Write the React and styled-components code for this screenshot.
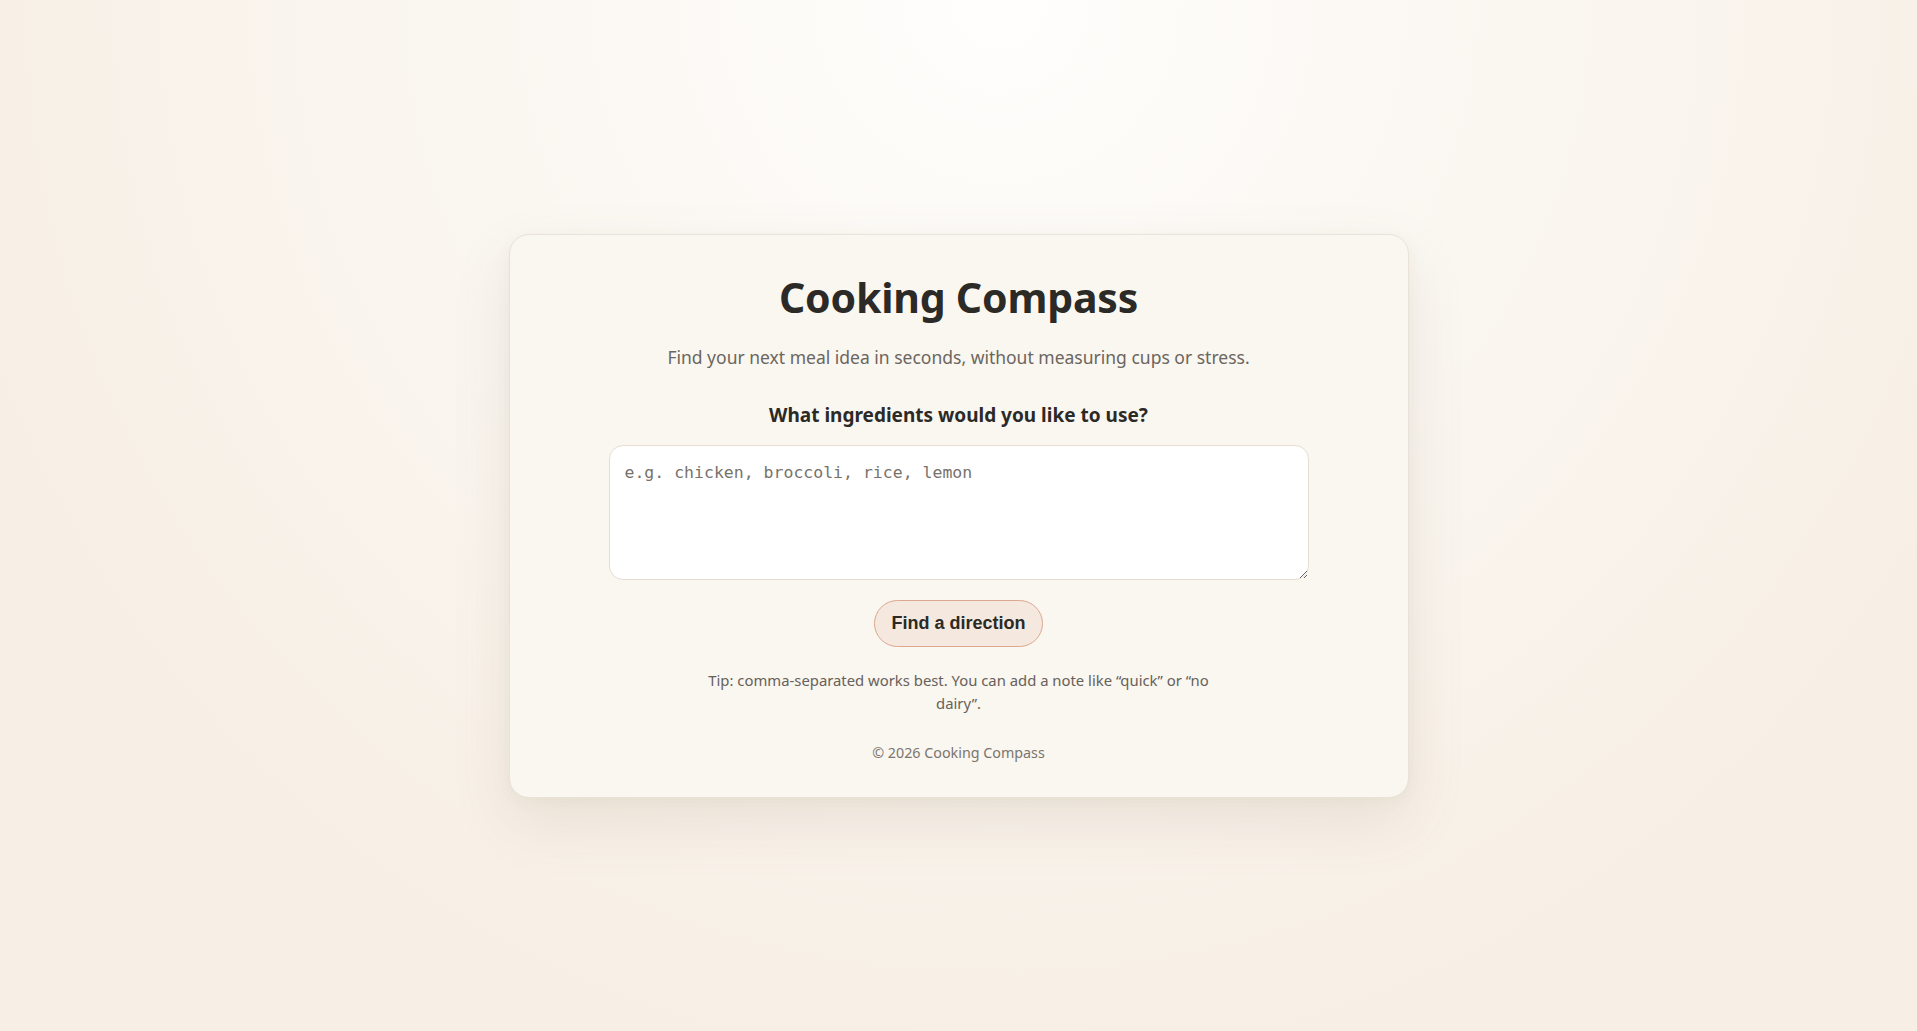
import React from 'react'
import styled, { createGlobalStyle } from 'styled-components'

const GlobalStyle = createGlobalStyle`
  html, body {
    margin: 0;
    padding: 0;
    height: 100%;
  }
  body {
    font-family: "Noto Sans", "Open Sans", sans-serif;
    color: #2b2a26;
    background: #f7efe5;
  }
  #root {
    min-height: 100%;
  }
`

const Page = styled.main`
  min-height: 100vh;
  box-sizing: border-box;
  display: flex;
  align-items: center;
  justify-content: center;
  background: radial-gradient(circle at 52% 0%, #fffefc 0%, #fbf8f3 30%, #f7efe5 75%);
`

const Card = styled.section`
  width: 900px;
  box-sizing: border-box;
  padding: 38px 99px 34px;
  background: #faf6f0;
  border: 1px solid #e9e2d8;
  border-radius: 20px;
  box-shadow: 0 24px 60px rgba(120, 110, 80, 0.12), 0 4px 14px rgba(120, 110, 80, 0.05);
  display: flex;
  flex-direction: column;
  align-items: center;
  text-align: center;
`

const Title = styled.h1`
  margin: 0;
  font-size: 41px;
  line-height: 48px;
  font-weight: 700;
  color: #2b2a26;
  letter-spacing: -0.2px;
`

const Subtitle = styled.p`
  margin: 24px 0 0;
  font-size: 17.5px;
  line-height: 24px;
  color: #6b665f;
`

const Label = styled.label`
  margin-top: 34px;
  font-size: 19px;
  line-height: 24px;
  font-weight: 700;
  color: #2b2a26;
`

const Field = styled.textarea`
  margin-top: 18px;
  width: 100%;
  height: 135px;
  box-sizing: border-box;
  padding: 15px 15px;
  background: #ffffff;
  border: 1px solid #e6ddd2;
  border-radius: 14px;
  font-family: "DejaVu Sans Mono", "Liberation Mono", monospace;
  font-size: 16.5px;
  line-height: 24px;
  color: #2b2a26;
  resize: vertical;
  outline: none;

  &::placeholder {
    color: #77726b;
  }
`

const Button = styled.button`
  margin-top: 20px;
  height: 47px;
  padding: 0 16.5px;
  background: #f5e9df;
  border: 1px solid #dca88e;
  border-radius: 999px;
  font-family: "Liberation Sans", Arial, sans-serif;
  font-size: 18px;
  font-weight: 700;
  color: #2b2a26;
  cursor: pointer;
`

const Tip = styled.p`
  margin: 22px 0 0;
  max-width: 520px;
  font-size: 14.85px;
  line-height: 23px;
  color: #66615a;
`

const Footer = styled.footer`
  margin-top: 28px;
  font-size: 14.3px;
  line-height: 20px;
  color: #7a756e;
`

export default function App() {
  return (
    <>
      <GlobalStyle />
      <Page>
        <Card>
          <Title>Cooking Compass</Title>
          <Subtitle>Find your next meal idea in seconds, without measuring cups or stress.</Subtitle>
          <Label htmlFor="ingredients">What ingredients would you like to use?</Label>
          <Field id="ingredients" placeholder="e.g. chicken, broccoli, rice, lemon" />
          <Button type="button">Find a direction</Button>
          <Tip>Tip: comma-separated works best. You can add a note like “quick” or “no dairy”.</Tip>
          <Footer>© 2026 Cooking Compass</Footer>
        </Card>
      </Page>
    </>
  )
}
